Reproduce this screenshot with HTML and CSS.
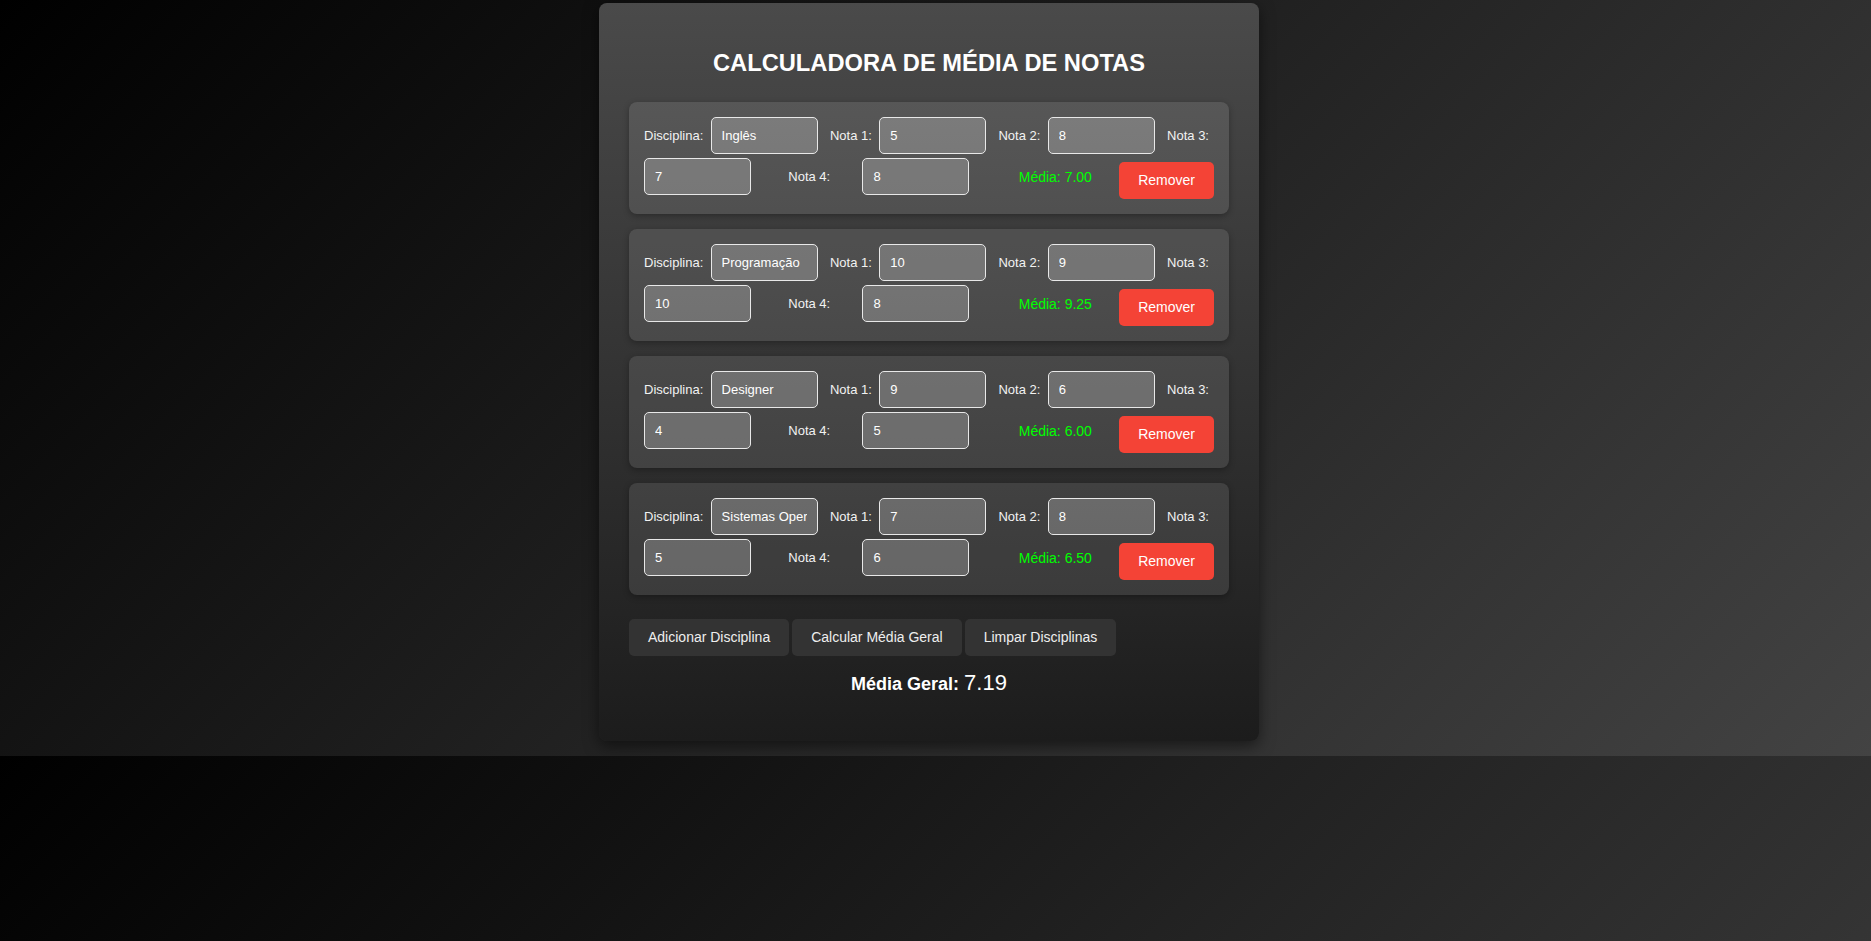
FILE: index.html
```html
<!DOCTYPE html>
<html lang="pt-BR">
<head>
<meta charset="UTF-8">
<title>Calculadora de Média de Notas</title>
<link rel="stylesheet" href="styles.css">
</head>
<body>
<div class="container">
  <h1 class="title">CALCULADORA DE MÉDIA DE NOTAS</h1>
  <div class="disciplinas">
    <div class="disciplina">
      <label>Disciplina:</label><input type="text" value="Inglês">
      <label>Nota 1:</label><input type="text" value="5">
      <label>Nota 2:</label><input type="text" value="8">
      <label>Nota 3:</label><input type="text" value="7">
      <label>Nota 4:</label><input type="text" value="8">
      <span class="media">Média: 7.00</span>
      <button class="btn-remover">Remover</button>
    </div>
    <div class="disciplina">
      <label>Disciplina:</label><input type="text" value="Programação">
      <label>Nota 1:</label><input type="text" value="10">
      <label>Nota 2:</label><input type="text" value="9">
      <label>Nota 3:</label><input type="text" value="10">
      <label>Nota 4:</label><input type="text" value="8">
      <span class="media">Média: 9.25</span>
      <button class="btn-remover">Remover</button>
    </div>
    <div class="disciplina">
      <label>Disciplina:</label><input type="text" value="Designer">
      <label>Nota 1:</label><input type="text" value="9">
      <label>Nota 2:</label><input type="text" value="6">
      <label>Nota 3:</label><input type="text" value="4">
      <label>Nota 4:</label><input type="text" value="5">
      <span class="media">Média: 6.00</span>
      <button class="btn-remover">Remover</button>
    </div>
    <div class="disciplina">
      <label>Disciplina:</label><input type="text" value="Sistemas Operacionais">
      <label>Nota 1:</label><input type="text" value="7">
      <label>Nota 2:</label><input type="text" value="8">
      <label>Nota 3:</label><input type="text" value="5">
      <label>Nota 4:</label><input type="text" value="6">
      <span class="media">Média: 6.50</span>
      <button class="btn-remover">Remover</button>
    </div>
  </div>
  <div class="acoes">
    <button class="btn-acao">Adicionar Disciplina</button>
    <button class="btn-acao">Calcular Média Geral</button>
    <button class="btn-acao">Limpar Disciplinas</button>
  </div>
  <div class="media-geral">Média Geral: <span class="valor">7.19</span></div>
</div>
</body>
</html>
```

FILE: styles.css
```css
body {
  margin: 0;
  padding: 3px 13px 15px 0;
  font-family: "Liberation Sans", Arial, sans-serif;
  background: linear-gradient(135deg, #000000, #434343);
  color: #fff;
}

.container {
  width: 600px;
  margin: 0 auto;
  padding: 30px;
  background: linear-gradient(to bottom, #4a4a4a, #1c1c1c);
  border-radius: 8px;
  box-shadow: 0 5px 15px rgba(0, 0, 0, 0.5);
}

.title {
  font-size: 23.7px;
  font-weight: bold;
  text-align: center;
  margin: 17px 0 25px;
  color: #fff;
}

.disciplina {
  display: flex;
  flex-wrap: wrap;
  justify-content: space-between;
  align-items: center;
  background: rgba(255, 255, 255, 0.1);
  padding: 15px;
  border-radius: 8px;
  margin-bottom: 15px;
  box-shadow: 0 2px 6px rgba(0, 0, 0, 0.3);
}

.disciplina label {
  font-size: 13px;
  margin-right: 5px;
  color: #f2f2f2;
}

.disciplina input {
  width: 85px;
  padding: 10px;
  margin-right: 10px;
  font: 13px "Liberation Sans", Arial, sans-serif;
  color: #fff;
  background: rgba(255, 255, 255, 0.22);
  border: 1px solid #e8e8e8;
  border-radius: 5px;
  outline: none;
}

.media {
  font-size: 14px;
  color: #00ff00;
  margin-left: 12px;
}

.btn-remover {
  margin-top: 8px;
  background: #f44336;
  color: #fff;
  border: none;
  border-radius: 5px;
  padding: 10px 19px;
  font: 14px/17px "Liberation Sans", Arial, sans-serif;
}

.acoes {
  display: flex;
  gap: 3px;
  margin-top: 24px;
}

.btn-acao {
  background: #333;
  color: #eee;
  border: none;
  border-radius: 5px;
  padding: 10px 19px;
  font: 14px/17px "Liberation Sans", Arial, sans-serif;
}

.media-geral {
  text-align: center;
  font-size: 18px;
  font-weight: bold;
  margin: 14px 0 15px;
}

.media-geral .valor {
  font-size: 22px;
  font-weight: normal;
}
```
